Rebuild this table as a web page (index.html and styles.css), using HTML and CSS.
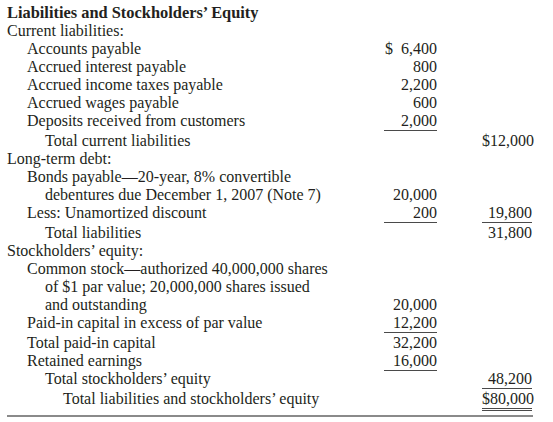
FILE: index.html
```html
<!DOCTYPE html>
<html>
<head>
<meta charset="utf-8">
<link rel="stylesheet" href="styles.css">
</head>
<body>
<div class="sheet">
  <div class="row title"><span class="label">Liabilities and Stockholders’ Equity</span></div>
  <div class="row"><span class="label">Current liabilities:</span></div>
  <div class="row"><span class="label i1">Accounts payable</span><span class="c1">$&nbsp;&nbsp;6,400</span></div>
  <div class="row"><span class="label i1">Accrued interest payable</span><span class="c1">800</span></div>
  <div class="row"><span class="label i1">Accrued income taxes payable</span><span class="c1">2,200</span></div>
  <div class="row"><span class="label i1">Accrued wages payable</span><span class="c1">600</span></div>
  <div class="row gap"><span class="label i1">Deposits received from customers</span><span class="c1 ul">2,000</span></div>
  <div class="row"><span class="label i2">Total current liabilities</span><span class="c1"></span><span class="c2">$12,000</span></div>
  <div class="row"><span class="label">Long-term debt:</span></div>
  <div class="row"><span class="label i1">Bonds payable—20-year, 8% convertible</span></div>
  <div class="row"><span class="label i2">debentures due December 1, 2007 (Note 7)</span><span class="c1">20,000</span></div>
  <div class="row gap"><span class="label i1">Less: Unamortized discount</span><span class="c1 ul">200</span><span class="c2 ul">19,800</span></div>
  <div class="row"><span class="label i2">Total liabilities</span><span class="c1"></span><span class="c2">31,800</span></div>
  <div class="row"><span class="label">Stockholders’ equity:</span></div>
  <div class="row"><span class="label i1">Common stock—authorized 40,000,000 shares</span></div>
  <div class="row"><span class="label i2">of $1 par value; 20,000,000 shares issued</span></div>
  <div class="row"><span class="label i2">and outstanding</span><span class="c1">20,000</span></div>
  <div class="row gap"><span class="label i1">Paid-in capital in excess of par value</span><span class="c1 ul">12,200</span></div>
  <div class="row"><span class="label i1">Total paid-in capital</span><span class="c1">32,200</span></div>
  <div class="row"><span class="label i1">Retained earnings</span><span class="c1 ul">16,000</span></div>
  <div class="row gap"><span class="label i2">Total stockholders’ equity</span><span class="c1"></span><span class="c2 ul">48,200</span></div>
  <div class="row"><span class="label i3">Total liabilities and stockholders’ equity</span><span class="c1"></span><span class="c2 dbl">$80,000</span></div>
  <div class="rule"></div>
</div>
</body>
</html>
```

FILE: styles.css
```css
html, body {
  margin: 0;
  padding: 0;
  background: #ffffff;
}
body {
  font-family: "Liberation Serif", "Times New Roman", serif;
  font-size: 16px;
  color: #231f20;
}
.sheet {
  width: 526px;
  margin-left: 7px;
  padding-top: 4px;
}
.row {
  display: grid;
  grid-template-columns: 1fr 53px 50px;
  column-gap: 45px;
  padding-right: 1px;
  line-height: 18px;
  height: 18px;
}
.row.gap {
  margin-bottom: 2px;
}
.title .label {
  font-weight: bold;
  font-size: 16.4px;
}
.label {
  white-space: nowrap;
}
.i1 { padding-left: 20px; }
.i2 { padding-left: 38px; }
.i3 { padding-left: 56px; }
.c1, .c2 {
  text-align: right;
  white-space: nowrap;
  box-sizing: border-box;
  height: 18px;
}
.c1 { grid-column: 2; }
.c2 { grid-column: 3; }
.ul {
  border-bottom: 1px solid #4a4a4a;
  height: 19px;
}
.dbl {
  border-bottom: 3px double #4a4a4a;
  height: 21px;
}
.rule {
  margin-top: 7px;
  height: 2px;
  background: #8a8a8a;
}
```
